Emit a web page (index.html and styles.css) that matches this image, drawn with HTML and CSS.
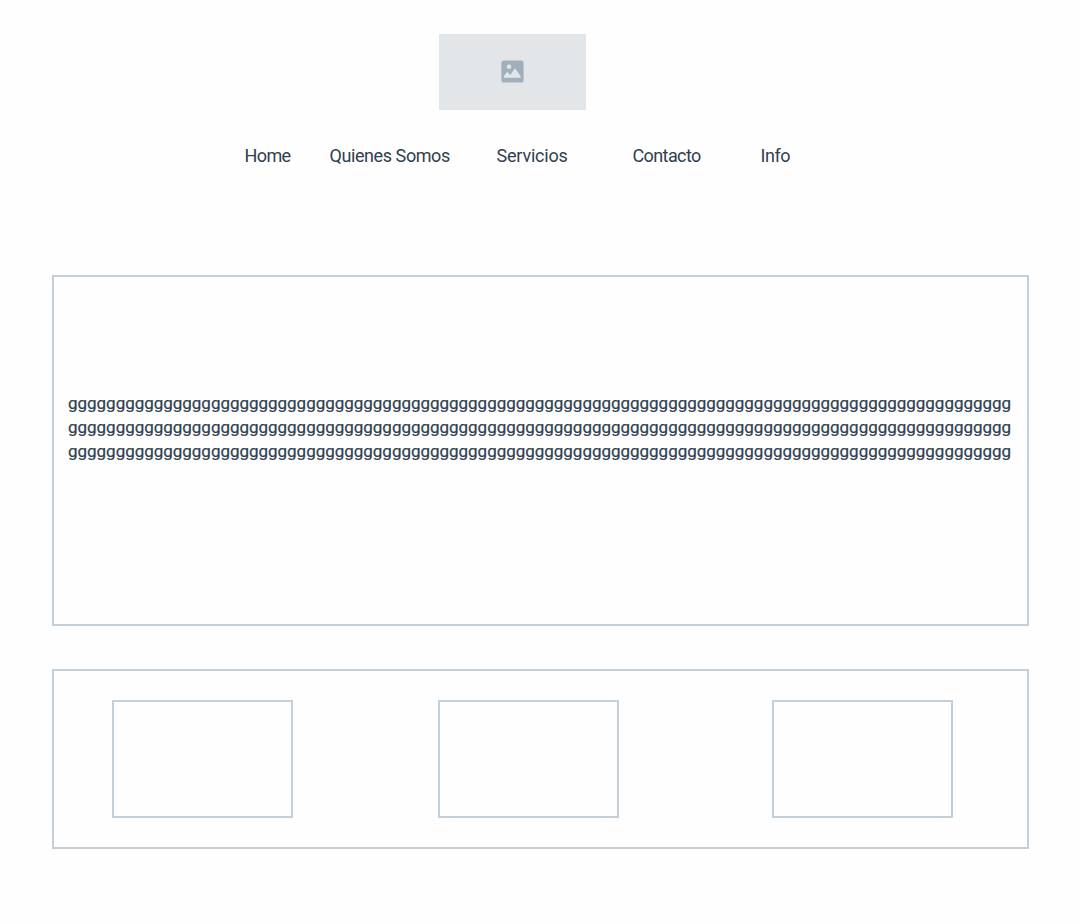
FILE: index.html
```
<!DOCTYPE html>
<html lang="es">
<head>
<meta charset="utf-8">
<title>Home</title>
<link rel="stylesheet" href="styles.css">
</head>
<body>
<header class="header">
  <div class="logo">
    <svg class="logo-icon" viewBox="0 0 23 23" aria-hidden="true">
      <rect x="0.4" y="0.4" width="22.2" height="22.2" rx="2.6" fill="#9fafbc"/>
      <circle cx="8" cy="6.8" r="2.3" fill="#e2e6e9"/>
      <path d="M2.8 17.8V16L6.3 11.8L9.2 15L14 8.3L19.8 16.4V17.8Z" fill="#e2e6e9"/>
    </svg>
  </div>
  <nav class="nav">
    <a class="nav-link nav-link-tight">Home</a>
    <a class="nav-link">Quienes Somos</a>
    <a class="nav-link nav-link-wide">Servicios</a>
    <a class="nav-link nav-link-tight">Contacto</a>
    <a class="nav-link">Info</a>
  </nav>
</header>
<main class="main">
  <section class="hero">
    <p class="hero-text">ggggggggggggggggggggggggggggggggggggggggggggggggggggggggggggggggggggggggggggggggggggggggggggggggggg<br>ggggggggggggggggggggggggggggggggggggggggggggggggggggggggggggggggggggggggggggggggggggggggggggggggggg<br>ggggggggggggggggggggggggggggggggggggggggggggggggggggggggggggggggggggggggggggggggggggggggggggggggggg</p>
  </section>
  <section class="cards">
    <div class="card"></div>
    <div class="card"></div>
    <div class="card"></div>
  </section>
</main>
</body>
</html>
```
FILE: styles.css
```
* { box-sizing: border-box; }
body {
  margin: 0;
  background: #fefefe;
  color: #2f4050;
  font-family: Roboto, "Liberation Sans", sans-serif;
}
.header { height: 275px; padding-top: 34px; }
.logo {
  display: flex;
  align-items: center;
  justify-content: center;
  width: 147px;
  height: 76px;
  margin-left: 439px;
  padding-bottom: 1px;
  background: #e2e6e9;
}
.logo-icon { width: 23px; height: 23px; }
.nav {
  display: grid;
  grid-template-columns: 85px 167px 136px 128px auto;
  margin: 34px 0 0 244.5px;
  font-size: 18px;
  line-height: 24px;
}
.nav-link { white-space: nowrap; letter-spacing: -0.42px; }
.nav-link-tight { letter-spacing: -0.6px; }
.nav-link-wide { letter-spacing: -0.2px; }
.main {
  display: flex;
  flex-direction: column;
  gap: 43px;
  width: 977px;
  margin-left: 52px;
}
.hero {
  height: 351px;
  padding: 114px 0 0 14px;
  border: 2px solid #c3cfd9;
}
.hero-text {
  margin: 0;
  font-size: 17px;
  line-height: 24px;
  letter-spacing: -0.02px;
  white-space: nowrap;
  -webkit-text-stroke: 0.2px #2f4050;
}
.cards {
  display: grid;
  grid-template-columns: 181px 181px 181px;
  column-gap: 145px;
  height: 180px;
  padding: 29px 0 29px 58px;
  border: 2px solid #c3cfd9;
}
.card { border: 2px solid #c3cfd9; }
.card:last-child { margin: 0 -8px 0 8px; }
```
